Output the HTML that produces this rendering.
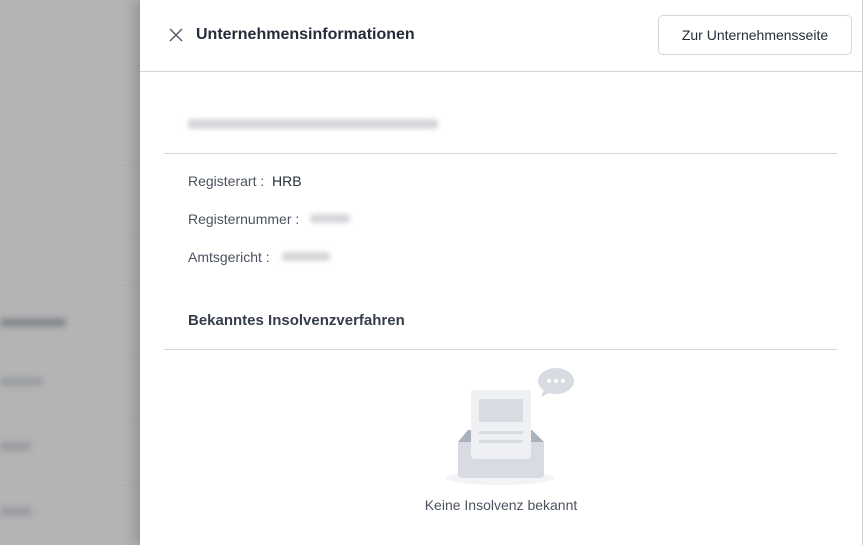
<!DOCTYPE html>
<html><head><meta charset="utf-8"><style>
*{margin:0;padding:0;box-sizing:border-box}
body{width:863px;height:545px;overflow:hidden;position:relative;font-family:"Liberation Sans",sans-serif;background:#b4b4b4}
.bl{position:absolute;filter:blur(3px);background:#8a8e94;height:9px;border-radius:3px}
.ln{position:absolute;left:0;width:140px;height:1px;background:#afafaf}
.panel{position:absolute;left:140px;top:0;width:722px;height:545px;background:#fff;box-shadow:-6px 0 12px rgba(0,0,0,.18)}
.rb{position:absolute;left:862px;top:0;width:1px;height:545px;background:#d0d0d0}
.t{position:absolute;color:#4b5260;font-size:14px;white-space:nowrap}
.hr{position:absolute;height:1px;background:#d4d4d8}
.blur{position:absolute;background:#d6d6da;filter:blur(2.5px);border-radius:3px}
</style></head><body>
<div class="ln" style="top:165px"></div>
<div class="ln" style="top:235px"></div>
<div class="ln" style="top:285px"></div>
<div class="ln" style="top:355px"></div>
<div class="ln" style="top:420px"></div>
<div class="ln" style="top:485px"></div>
<div class="bl" style="left:0;top:318px;width:66px;background:#858990"></div>
<div class="bl" style="left:0;top:377px;width:43px;background:#9a9da2"></div>
<div class="bl" style="left:0;top:442px;width:31px;background:#9a9da2"></div>
<div class="bl" style="left:0;top:507px;width:32px;background:#9a9da2"></div>
<div class="panel">
  <svg style="position:absolute;left:29px;top:28px" width="14" height="14" viewBox="0 0 14 14"><path d="M1 1L13 13M13 1L1 13" stroke="#4b5260" stroke-width="1.3"/></svg>
  <div class="t" style="left:56px;top:26px;font-size:16px;font-weight:bold;color:#262d3a">Unternehmensinformationen</div>
  <div style="position:absolute;left:518px;top:15px;width:194px;height:40px;border:1px solid #d6d6da;border-radius:5px;color:#262d3a;font-size:14px;text-align:center;line-height:38px">Zur Unternehmensseite</div>
  <div class="hr" style="left:0;top:71px;width:722px"></div>
  <div class="blur" style="left:48px;top:119px;width:250px;height:10px"></div>
  <div class="hr" style="left:24px;top:153px;width:673px"></div>
  <div class="t" style="left:48px;top:173px">Registerart :&nbsp; <span style="color:#262d3a">HRB</span></div>
  <div class="t" style="left:48px;top:211px">Registernummer :</div>
  <div class="blur" style="left:170px;top:214px;width:40px;height:9px"></div>
  <div class="t" style="left:48px;top:249px">Amtsgericht :</div>
  <div class="blur" style="left:142px;top:252px;width:48px;height:9px"></div>
  <div class="t" style="left:48px;top:312px;font-size:15px;font-weight:bold;color:#363d4a">Bekanntes Insolvenzverfahren</div>
  <div class="hr" style="left:24px;top:349px;width:673px"></div>
  <svg style="position:absolute;left:300px;top:362px" width="140" height="128" viewBox="0 0 140 128">
    <ellipse cx="60" cy="116" rx="54" ry="7" fill="#f2f3f5"/>
    <path d="M18 80L28 68H92L104 80Z" fill="#aab2bc"/>
    <rect x="31" y="28" width="60" height="72" rx="2" fill="#eff0f3"/>
    <rect x="39" y="37" width="44" height="23" fill="#d8dce2"/>
    <rect x="39" y="69" width="44" height="3" fill="#d8dce2"/>
    <rect x="39" y="78" width="44" height="3" fill="#d8dce2"/>
    <path d="M18 80H31V92Q31 97 36 97H86Q91 97 91 92V80H104V112Q104 116 100 116H22Q18 116 18 112Z" fill="#d8dce2"/>
    <ellipse cx="116" cy="19" rx="18" ry="13" fill="#d8dce2"/>
    <path d="M104 28L101 35L111 30Z" fill="#d8dce2"/>
    <circle cx="109" cy="19" r="2" fill="#fff"/><circle cx="116" cy="19" r="2" fill="#fff"/><circle cx="123" cy="19" r="2" fill="#fff"/>
  </svg>
  <div class="t" style="left:0;width:722px;text-align:center;top:497px;font-size:14px">Keine Insolvenz bekannt</div>
</div>
<div class="rb"></div>
</body></html>
